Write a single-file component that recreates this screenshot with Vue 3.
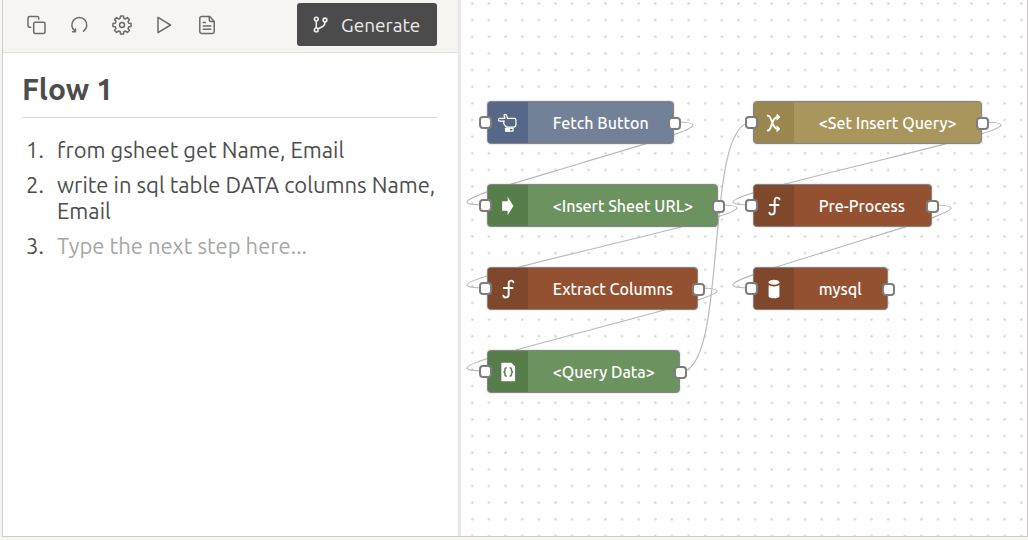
<template>
  <main class="workspace">
    <!-- Steps editor -->
    <section class="editor">
      <header class="toolbar">
        <div class="tools">
          <button type="button" class="tool-btn" aria-label="Copy">
            <svg viewBox="0 0 20 20">
              <path d="M4.700 12.200H3.500c-.9 0-1.500-.6-1.500-1.500V3c0-.9.6-1.500 1.500-1.500h7.700c.9 0 1.500.6 1.500 1.500v1.200" />
              <rect x="7.700" y="7.200" width="11.300" height="11.300" rx="1.500" />
            </svg>
          </button>
          <button type="button" class="tool-btn" aria-label="Undo">
            <svg viewBox="0 0 20 20">
              <path d="M14.600 16.200A7.500 7.500 0 1 0 6 16.200" />
              <path d="M3.500 16.700l2.900.1.100-2.900" />
            </svg>
          </button>
          <button type="button" class="tool-btn" aria-label="Settings">
            <svg viewBox="0 0 20 20">
              <path :d="gearPath" />
              <circle cx="10" cy="10" r="2.500" />
            </svg>
          </button>
          <button type="button" class="tool-btn" aria-label="Run">
            <svg viewBox="0 0 20 20">
              <path d="M3 2.300v15.400L15.500 10z" />
            </svg>
          </button>
          <button type="button" class="tool-btn" aria-label="Document">
            <svg viewBox="0 0 20 20">
              <path d="M11.800 1.500H3.500c-1 0-1.700.7-1.700 1.700v13.600c0 1 .7 1.700 1.700 1.700h11c1 0 1.700-.7 1.700-1.700V6.400z" />
              <path d="M11.300 1.500v3.400c0 .9.600 1.500 1.500 1.500h3.400M5.200 7.400h2.200M5.200 11h7.600M5.200 14.300h7.600" />
            </svg>
          </button>
        </div>
        <button type="button" class="generate-btn">
          <svg viewBox="0 0 16 18">
            <circle cx="3.500" cy="3.200" r="2" />
            <circle cx="3.500" cy="14.800" r="2" />
            <circle cx="12.800" cy="4.200" r="2" />
            <path d="M3.500 5.200v7.600M12.800 6.200c0 4.500-3 5.300-7.600 7.400" />
          </svg>
          Generate
        </button>
      </header>

      <div class="flow">
        <h1>Flow 1</h1>
        <ol class="steps">
          <li v-for="(step, i) in steps" :key="i">
            <span class="num">{{ i + 1 }}.</span>
            <span class="step-text">{{ step }}</span>
          </li>
          <li>
            <label class="num" for="next-step">{{ steps.length + 1 }}.</label>
            <input id="next-step" v-model="nextStep" type="text" placeholder="Type the next step here...">
          </li>
        </ol>
      </div>
    </section>

    <!-- Flow canvas -->
    <section class="canvas">
      <svg class="wires">
        <defs>
          <pattern
            id="dots"
            width="20"
            height="20"
            patternUnits="userSpaceOnUse"
            patternTransform="translate(3 -4.800) scale(.8318)"
          >
            <circle cx="10" cy="10" r="1.600" fill="#d6d6d8" />
          </pattern>
        </defs>
        <rect width="100%" height="100%" fill="url(#dots)" />
        <path v-for="(wire, i) in wires" :key="i" :d="wire" class="wire" />
      </svg>

      <div
        v-for="node in nodes"
        :key="node.label"
        class="node"
        :class="node.kind"
        :style="{ left: node.x + 'px', top: node.y + 'px', width: node.w + 'px' }"
      >
        <span class="node-icon">
          <svg v-if="node.icon === 'hand'" viewBox="0 0 24 24" class="line">
            <path d="M7.500 9.600H2c-2-.3-2-3 0-3.200h6.300L7.300 3.600C7 1.400 9.700 1 10.300 3l1.200 3.600 8.300-.3c1.200 0 1.700.8 1.700 2v5.500c0 1.500-1.200 3.200-3 3.200h-7c-1.500 0-2.700-.7-3.300-2.200-1.300-1.500-1.600-3.600-.7-5.200z" />
            <path d="M9.300 18.300h8.800v3.400H9.300z" />
            <path d="M9.300 18.300h4.500v3.400H9.300z" class="solid" />
          </svg>
          <svg v-else-if="node.icon === 'arrow'" viewBox="0 0 24 24">
            <path d="M5 6.200h6.500V.8L18.500 12l-7 11.200v-5.400H5z" />
          </svg>
          <svg v-else-if="node.icon === 'func'" viewBox="0 0 24 24" class="line thick">
            <path d="M18.500 4c-.4-3-5.700-3-5.700 1.500v13c0 4.500-5.900 4.500-6.300 1.500M7 10.700h10.500" />
          </svg>
          <svg v-else-if="node.icon === 'file'" viewBox="0 0 24 24">
            <path d="M4 1h12l4.500 4.500V23H4z" />
            <path d="M10.500 7c-1.800 0-2.200.8-2.200 2.600S8 12 6.500 12c1.500 0 1.800.7 1.800 2.400s.4 2.600 2.200 2.600M14 7c1.800 0 2.200.8 2.200 2.600S16.500 12 18 12c-1.500 0-1.800.7-1.800 2.400S15.800 17 14 17" class="cut" />
          </svg>
          <svg v-else-if="node.icon === 'switch'" viewBox="0 0 24 24" class="line thick">
            <path d="M4.500 3.200c5-.8 4.800 15.700 11.500 15.800M4.500 21C10 21 8.500 5 16 5" />
            <path d="M15.800 1.800l3.400 3.200-3.400 3.200zM15.800 15.800l3.400 3.200-3.400 3.200z" class="solid" />
          </svg>
          <svg v-else viewBox="0 0 24 24">
            <ellipse cx="12" cy="4" rx="6.500" ry="3" />
            <path d="M5.500 7.200c2.700 2.200 10.300 2.200 13 0V20c0 4.300-13 4.300-13 0z" />
          </svg>
        </span>
        <span class="node-label">{{ node.label }}</span>
        <span class="port port-in"></span>
        <span class="port port-out"></span>
      </div>
    </section>
  </main>
</template>

<script setup>
import { ref } from 'vue'

const nextStep = ref('')

const steps = [
  'from gsheet get Name, Email',
  'write in sql table DATA columns Name, Email'
]

const nodes = [
  { label: 'Fetch Button', kind: 'blue', icon: 'hand', x: 26, y: 101, w: 187 },
  { label: '<Insert Sheet URL>', kind: 'green', icon: 'arrow', x: 26, y: 184, w: 231 },
  { label: 'Extract Columns', kind: 'brown', icon: 'func', x: 26, y: 267, w: 211 },
  { label: '<Query Data>', kind: 'green', icon: 'file', x: 26, y: 350, w: 193 },
  { label: '<Set Insert Query>', kind: 'olive', icon: 'switch', x: 292, y: 101, w: 229 },
  { label: 'Pre-Process', kind: 'brown', icon: 'func', x: 292, y: 184, w: 179 },
  { label: 'mysql', kind: 'brown', icon: 'db', x: 292, y: 267, w: 135 }
]

// a wire to a lower node loops back, a wire to the next column is an S curve
const link = (a, b) => {
  const x1 = a.x + a.w
  const y1 = a.y + 21
  const x2 = b.x - 1
  const y2 = b.y + 21
  if (x2 > x1) {
    return `M${x1} ${y1 + 1}C${x1 + 50} ${y1 + 1} ${x2 - 50} ${y2} ${x2} ${y2}`
  }
  const mx = (x1 + x2) / 2
  const my = (y1 + y2) / 2
  const d = (x1 - x2) * 0.3
  return `M${x1} ${y1}C${x1 + 12} ${y1} ${x1 + 19} ${y1 + 1} ${x1 + 19} ${y1 + 3}` +
    `C${x1 + 19} ${y1 + 9} ${mx + d} ${my - 17} ${mx} ${my}` +
    `C${mx - d} ${my + 17} ${x2 - 19} ${y2 - 9} ${x2 - 19} ${y2 - 3}` +
    `C${x2 - 19} ${y2 - 1} ${x2 - 12} ${y2} ${x2} ${y2}`
}

const wires = nodes.slice(1).map((node, i) => link(nodes[i], node))

// eight teeth around a 20x20 box
const point = (r, deg) => {
  const a = deg * Math.PI / 180
  return `${10 + r * Math.cos(a)} ${10 + r * Math.sin(a)}`
}
const gearPath = 'M' + [0, 45, 90, 135, 180, 225, 270, 315]
  .map(a => `${point(7, a - 15)}L${point(9.2, a - 9)}L${point(9.2, a + 9)}L${point(7, a + 15)}`)
  .join('L') + 'Z'
</script>

<style>
body {
  margin: 0;
  background: #f6f5f2;
}
</style>

<style scoped>
.workspace {
  display: flex;
  box-sizing: border-box;
  min-height: calc(100vh - 3px);
  margin-left: 2px;
  border: 1px solid #cdccca;
  border-top: none;
  background: #fff;
  color: #4d4d4d;
  font-family: Ubuntu, "Noto Sans", sans-serif;
}

/* Editor */
.editor {
  flex: 0 0 44.7%;
  box-sizing: border-box;
  border-right: 3px solid #e8e8e8;
}

.toolbar {
  display: flex;
  align-items: center;
  justify-content: space-between;
  box-sizing: border-box;
  padding: 3px 21px 6px 23px;
  background: #f6f5f2;
  border-bottom: 1px solid #e3e2df;
}

.tools {
  display: flex;
  gap: 23px;
}

.tool-btn {
  display: flex;
  width: 20px;
  height: 20px;
  padding: 0;
  border: none;
  background: none;
  cursor: pointer;
}

.tool-btn svg {
  width: 20px;
  height: 20px;
  fill: none;
  stroke: #6b6b6b;
  stroke-width: 1.5;
  stroke-linejoin: round;
  stroke-linecap: round;
}

.generate-btn {
  display: flex;
  align-items: center;
  justify-content: center;
  gap: 13px;
  width: 140px;
  height: 43px;
  padding: 0;
  border: none;
  border-radius: 3px;
  background: #4b4b4b;
  color: #ececec;
  font-family: inherit;
  font-size: 19px;
  cursor: pointer;
}

.generate-btn svg {
  width: 15px;
  height: 17px;
  fill: none;
  stroke: #ececec;
  stroke-width: 1.7;
}

.flow {
  padding: 16px 21px 0 19px;
}

h1 {
  margin: 0;
  padding-bottom: 8px;
  border-bottom: 1px solid #d8d8d8;
  font-size: 30px;
  font-weight: 700;
  line-height: 40px;
}

.steps {
  display: flex;
  flex-direction: column;
  gap: 9px;
  margin: 0;
  padding: 19px 0 0 4px;
  list-style: none;
  font-size: 22px;
  line-height: 26px;
}

.steps li {
  display: flex;
}

.num {
  flex: 0 0 31px;
}

.step-text {
  flex: 1;
  min-width: 0;
}

.steps input {
  flex: 1;
  min-width: 0;
  height: 26px;
  padding: 0;
  border: none;
  outline: none;
  background: none;
  color: inherit;
  font: inherit;
}

.steps input::placeholder {
  color: #a6a6a6;
  opacity: 1;
}

/* Canvas */
.canvas {
  position: relative;
  flex: 1;
  overflow: hidden;
}

.wires {
  position: absolute;
  inset: 0;
  width: 100%;
  height: 100%;
}

.wire {
  fill: none;
  stroke: #b9b9bc;
  stroke-width: 1.2;
}

.node {
  position: absolute;
  display: flex;
  align-items: center;
  box-sizing: border-box;
  height: 43px;
  border: 1px solid #858585;
  border-radius: 4px;
  box-shadow: 0 0 2px rgba(0, 0, 0, 0.25);
  color: #fff;
}

.node-icon {
  display: flex;
  align-items: center;
  justify-content: center;
  flex: 0 0 40px;
  height: 100%;
  border-radius: 3px 0 0 3px;
}

.node-icon svg {
  width: 20px;
  height: 20px;
  fill: #fff;
}

.node-icon .line {
  fill: none;
  stroke: #fff;
  stroke-width: 1.5;
  stroke-linecap: round;
  stroke-linejoin: round;
}

.node-icon .thick {
  stroke-width: 2.3;
}

.node-icon .solid {
  fill: #fff;
  stroke-width: 1;
}

.node-icon .cut {
  fill: none;
  stroke: #5a7f4c;
  stroke-width: 1.8;
}

.node-label {
  padding-left: 25px;
  font-size: 16px;
  font-weight: 500;
  line-height: 20px;
  white-space: nowrap;
}

.blue {
  background: #728098;
}

.blue .node-icon {
  background: #566787;
}

.green {
  background: #6c935f;
}

.green .node-icon {
  background: #577d4b;
}

.brown {
  background: #945132;
}

.brown .node-icon {
  background: #7f472c;
}

.olive {
  background: #a9965c;
}

.olive .node-icon {
  background: #99874f;
}

.port {
  position: absolute;
  box-sizing: border-box;
  width: 13px;
  height: 13px;
  border: 2px solid #7d7d7d;
  border-radius: 4px;
  background: #fff;
}

.port-in {
  top: 14px;
  left: -9px;
}

.port-out {
  top: 15px;
  right: -8px;
}
</style>
